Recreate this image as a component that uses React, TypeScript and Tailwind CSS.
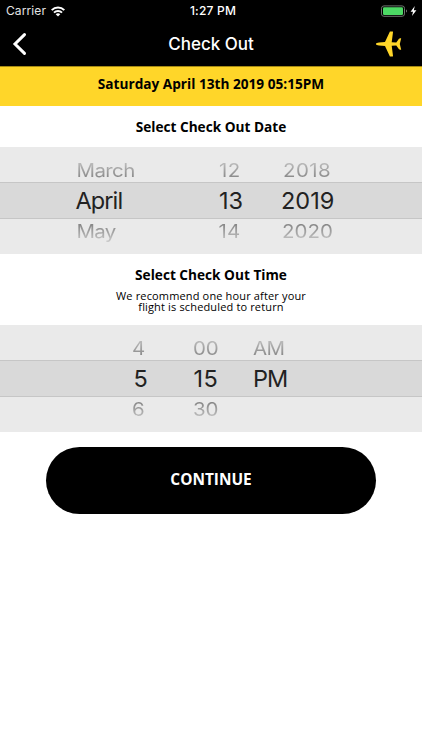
type Cell = { text: string; className: string };

const dateRows: Cell[][] = [
  [
    { text: "March", className: "pl-[0.5px] tracking-[-0.6px]" },
    { text: "12", className: "tracking-[0.3px]" },
    { text: "2018", className: "pl-[2px] tracking-[0.4px]" },
  ],
  [
    { text: "April", className: "-ml-[0.5px] tracking-[-0.9px]" },
    { text: "13", className: "" },
    { text: "2019", className: "tracking-[0px]" },
  ],
  [
    { text: "May", className: "pl-[0.5px] tracking-[-0.7px]" },
    { text: "14", className: "-ml-[0.5px] tracking-[0.2px]" },
    { text: "2020", className: "pl-[1px]" },
  ],
];

const timeRows: Cell[][] = [
  [
    { text: "4", className: "-ml-[1px]" },
    { text: "00", className: "tracking-[-0.2px]" },
    { text: "AM", className: "tracking-[-0.6px]" },
  ],
  [
    { text: "5", className: "pl-[0.5px]" },
    { text: "15", className: "pl-[0.5px] tracking-[0.4px]" },
    { text: "PM", className: "tracking-[-1px]" },
  ],
  [
    { text: "6", className: "-ml-[1px]" },
    { text: "30", className: "tracking-[-0.2px]" },
    { text: "", className: "" },
  ],
];

const rowStyles = [
  "h-[35px] pt-[11.5px] text-[20.5px] [&_span]:bg-linear-to-b [&_span]:from-[#c4c4c4] [&_span]:to-[#7d7d7d]",
  "h-[37px] border-y border-[#c6c6c6] bg-[#d9d9d9] pt-[6px] text-[23.5px] text-[#222222]",
  "h-[35px] pt-[0.5px] text-[20.5px] [&_span]:bg-linear-to-b [&_span]:from-[#7d7d7d] [&_span]:to-[#cccccc]",
];

function Picker({ rows, columns }: { rows: Cell[][]; columns: string }) {
  return (
    <div className="h-[107px] overflow-hidden bg-[#eaeaea] font-['Inter',sans-serif]">
      {rows.map((row, i) => (
        <div key={i} className={`grid ${columns} ${rowStyles[i]}`}>
          {row.map((cell, j) => (
            <div key={j} className={`leading-6 whitespace-nowrap ${cell.className}`}>
              <span
                className={
                  i === 1
                    ? "inline-block"
                    : "inline-block scale-y-[0.88] bg-clip-text text-transparent"
                }
              >
                {cell.text}
              </span>
            </div>
          ))}
        </div>
      ))}
    </div>
  );
}

function StatusBar() {
  return (
    <div className="grid h-[22px] grid-cols-[1fr_80px_1fr] items-center pr-[5px] pl-[6px] text-[12px]">
      <div className="flex items-center gap-[5px]">
        <span className="tracking-[0.1px] text-[#e4e4e4]">Carrier</span>
        <svg width="14" height="11" viewBox="0 0 14 11" fill="none" stroke="white" strokeWidth="2">
          <path d="M0.7 4.1C4.2 0.6 9.8 0.6 13.3 4.1" />
          <path d="M3 6.6C5.2 4.4 8.8 4.4 11 6.6" />
          <path d="M7 10.6L4.7 8.2C6 7 8 7 9.3 8.2Z" fill="white" stroke="none" />
        </svg>
      </div>
      <span className="pl-[3px] text-center font-medium tracking-[0.2px]">1:27 PM</span>
      <div className="flex items-center justify-end">
        <svg width="37" height="12" viewBox="0 0 37 12">
          <rect x="1.5" y="0.9" width="23" height="10.4" rx="2.4" fill="none" stroke="#6d756e" />
          <rect x="3" y="2.3" width="20" height="7.6" rx="1.2" fill="#4cd964" />
          <path d="M26 4.4C27.3 4.8 27.3 7.2 26 7.6Z" fill="#777" />
          <path d="M34.8 1L30.6 6.7H33L32 11L36.4 5.2H33.8Z" fill="white" />
        </svg>
      </div>
    </div>
  );
}

export default function App() {
  return (
    <main className="h-[750px] w-[422px] overflow-hidden bg-white font-['Open_Sans',sans-serif] text-black">
      <header className="h-[67px] border-b border-[#a58a14] bg-black font-['Inter',sans-serif] text-white">
        <StatusBar />
        <div className="grid grid-cols-[60px_1fr_60px] items-center pt-[9px]">
          <svg className="ml-[11px]" width="16" height="24" viewBox="0 0 16 24" fill="none" stroke="white" strokeWidth="3">
            <path d="M13.5 2.6L4 12L13.5 21.4" strokeLinecap="round" />
          </svg>
          <h1 className="text-center text-[17px] leading-6 font-medium">Check Out</h1>
          <svg className="ml-[13px]" width="28" height="26" viewBox="0 0 28 26" fill="#ffd629">
            <path d="M1 13C1 12 2.5 11.6 4 11.5L10 11L14.9 0.4H17.7C18 0.4 18.1 0.8 18 1.2L16.7 11.2L21.3 11.6L23.6 8.3C24 7.7 24.8 7.3 26.2 7.3L24.8 13L26.2 18.7C24.8 18.7 24 18.3 23.6 17.7L21.3 14.4L16.7 14.8L18 24.8C18.1 25.2 18 25.6 17.7 25.6H14.9L10 15L4 14.5C2.5 14.4 1 14 1 13Z" />
          </svg>
        </div>
      </header>

      <div className="h-[39px] bg-[#ffd629] pt-[7px] text-center text-[13.65px] leading-5 font-bold">
        Saturday April 13th 2019 05:15PM
      </div>

      <h2 className="h-[41px] pt-[11px] text-center text-[13.65px] leading-5 font-bold">Select Check Out Date</h2>
      <Picker rows={dateRows} columns="grid-cols-[143px_62px_1fr] pl-[76px]" />

      <section className="h-[71px] pt-[11px] text-center">
        <h2 className="text-[13.65px] leading-5 font-bold">Select Check Out Time</h2>
        <p className="pt-[5px] text-[11px] leading-[11px] tracking-[0.15px]">
          We recommend one hour after your
          <br />
          flight is scheduled to return
        </p>
      </section>
      <Picker rows={timeRows} columns="grid-cols-[60px_60px_1fr] pl-[133px]" />

      <button className="mt-[15px] ml-[46px] block h-[67px] w-[330px] rounded-full bg-black pb-[2px] text-[15.4px] font-bold text-white">
        CONTINUE
      </button>
    </main>
  );
}
